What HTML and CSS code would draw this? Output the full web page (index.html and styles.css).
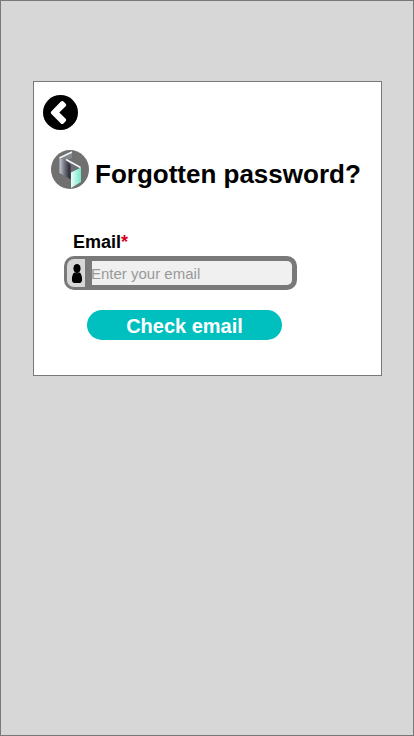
FILE: index.html
```html
<!DOCTYPE html>
<html lang="en">
<head>
<meta charset="utf-8">
<title>Forgotten password</title>
<link rel="stylesheet" href="styles.css">
</head>
<body>
<main class="card">
  <a class="back" href="#">
    <svg width="35" height="35" viewBox="0 0 35 35"><circle cx="17.5" cy="17.5" r="17.5"/><path d="M8.200 16.500 17.900 6.500Q19.200 5.300 20.500 6.500L22.700 8.700Q23.900 10 22.700 11.300L16.300 17.500 22.700 23.700Q23.900 25 22.700 26.300L20.500 28.500Q19.200 29.700 17.900 28.500L8.200 18.700Q7.300 17.600 8.200 16.500z" fill="#fff"/></svg>
  </a>
  <header class="title">
    <svg class="logo" width="38" height="39" viewBox="0 0 38 39">
      <defs>
        <linearGradient id="dark"><stop offset="0" stop-color="#c9ccd4"/><stop offset=".4" stop-color="#777986"/><stop offset=".85" stop-color="#30313c"/><stop offset="1" stop-color="#4b4d58"/></linearGradient>
        <linearGradient id="mint"><stop offset="0" stop-color="#e9fff9"/><stop offset="1" stop-color="#74e6c6"/></linearGradient>
      </defs>
      <ellipse cx="19" cy="19.5" rx="19" ry="19.5" fill="#707070"/>
      <path d="M8.500 8 15 10l5 5v14.500L8.500 23z" fill="url(#dark)"/>
      <path d="M8.500 8 21 2v6l-6 2z" fill="#83868e"/>
      <path d="M15 10 29.500 17.500 20 22V15z" fill="#6b6e74"/>
      <path d="M20 22.500 30 17.500V32l-10 6z" fill="url(#mint)"/>
      <path d="M8.500 8 21 2M15 9.500 29.500 17.500" fill="none" stroke="#f2f8f7" stroke-width="1.500"/>
    </svg>
    <h1>Forgotten password?</h1>
  </header>
  <form class="form">
    <label class="label" for="email">Email<span class="required">*</span></label>
    <div class="field">
      <span class="icon"><svg width="12" height="20" viewBox="0 0 12 20"><ellipse cx="6" cy="4.600" rx="3.600" ry="4.600"/><path d="M3 8.500Q6 10 9 8.500C10.700 10.500 11.300 13.500 11 16.700 10.500 18.500 9.500 19 8.500 19h-5C2.500 19 1.500 18.500 1 16.700.7 13.500 1.300 10.500 3 8.500z"/></svg></span>
      <input id="email" type="email" placeholder="Enter your email">
    </div>
    <button class="submit" type="button">Check email</button>
  </form>
</main>
</body>
</html>
```
FILE: styles.css
```css
* { box-sizing: border-box; }

body {
  margin: 0;
  height: 736px;
  padding: 80px 31px 0 32px;
  border: 1px solid #797979;
  background: #d7d7d7;
  font-family: "Liberation Sans", Arial, sans-serif;
}

.card {
  width: 349px;
  height: 295px;
  padding: 13px 0 0 9px;
  border: 1px solid #797979;
  background: #fff;
}

.back { display: block; width: 35px; height: 35px; }
.back svg, .logo, .icon svg { display: block; }

.title {
  display: flex;
  gap: 6px;
  margin: 20px 0 0 8px;
}

h1 {
  margin: 9px 0 0;
  font-size: 26px;
  line-height: 30px;
  white-space: nowrap;
}

.form { margin: 43px 0 0 21px; }

.label {
  display: block;
  margin-left: 9px;
  font-size: 18px;
  font-weight: bold;
  line-height: 20px;
}

.required { color: #d9001b; }

.field {
  display: flex;
  width: 233px;
  height: 34px;
  margin-top: 4px;
  padding: 3px 5px 5px 3px;
  border-radius: 10px;
  background: #797979;
}

.icon {
  width: 18px;
  height: 28px;
  padding: 5px 0 0 4px;
  border-radius: 7px 0 0 7px;
  background: #d7d7d7;
}

input {
  width: 200px;
  height: 24px;
  margin: 2px 0 0 7px;
  padding: 1px 0 0;
  border: 0;
  border-radius: 0 5px 5px 0;
  background: #f0f0f0;
  font: 15px/23px "Liberation Sans", Arial, sans-serif;
  text-indent: -1px;
}

input::placeholder { color: #999; opacity: 1; }

.submit {
  display: block;
  width: 195px;
  height: 30px;
  margin: 20px 0 0 23px;
  padding: 2px 0 0;
  border: 0;
  border-radius: 15px;
  background: #00bfbf;
  color: #fff;
  font: bold 20px/28px "Liberation Sans", Arial, sans-serif;
}
```
